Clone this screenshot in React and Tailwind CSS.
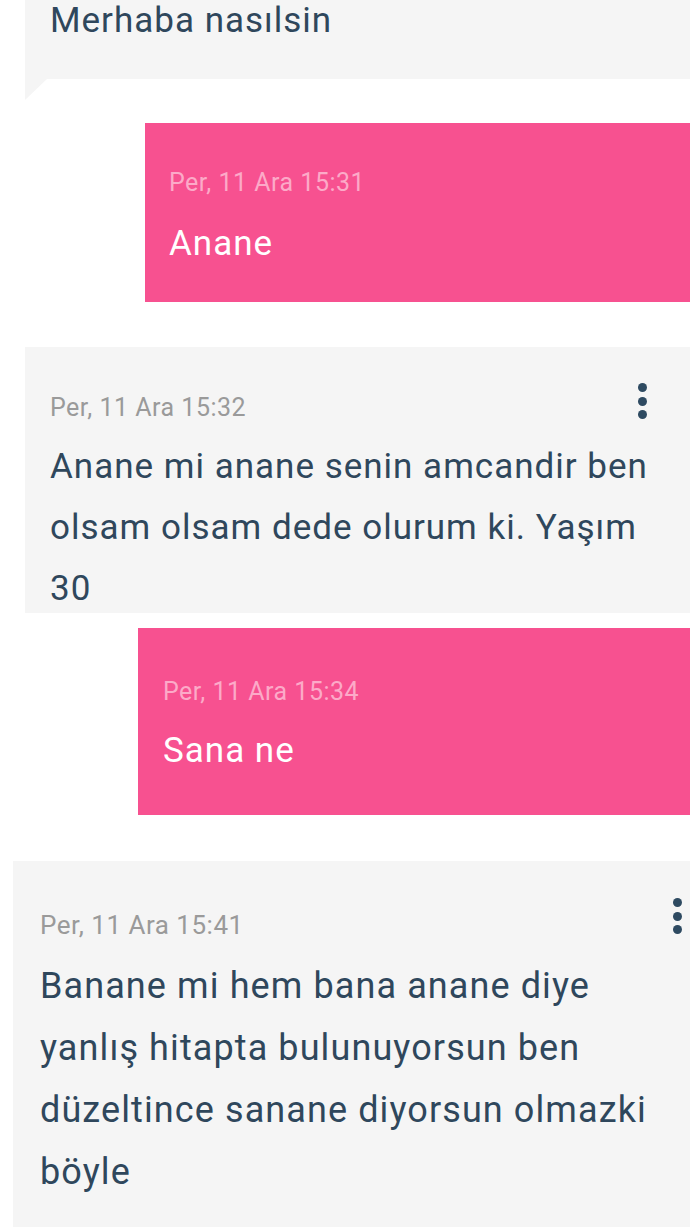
import React from 'react';

const font = { fontFamily: 'Roboto, "Noto Sans", sans-serif' };

const Dots = ({ className }) => (
  <div className={`absolute flex flex-col gap-[4.5px] ${className}`}>
    <span className="block w-[9px] h-[9px] rounded-full bg-[#2e4a61]" />
    <span className="block w-[9px] h-[9px] rounded-full bg-[#2e4a61]" />
    <span className="block w-[9px] h-[9px] rounded-full bg-[#2e4a61]" />
  </div>
);

const Stamp = ({ children, mine, className = 'text-[25px] leading-[30px] tracking-[0.5px]' }) => (
  <div className={`${className} ${mine ? 'text-[#fcaac8]' : 'text-[#9a9a9a]'}`}>{children}</div>
);

const Body = ({ children, mine, className = '', size = 'text-[35px] leading-[61px] tracking-[1px]' }) => (
  <p className={`${size} ${mine ? 'text-white' : 'text-[#2f475c]'} ${className}`}>{children}</p>
);

export default function App() {
  return (
    <div className="w-[690px] h-[1227px] overflow-hidden bg-white" style={font}>
      {/* first incoming message, cut off at the top */}
      <div className="relative ml-[25px] mt-[-10px] bg-[#f5f5f5] pl-[25px] pr-[25px] pb-[28px]">
        <Body>Merhaba nasılsin</Body>
        <svg className="absolute left-0 top-full" width="22" height="21" viewBox="0 0 22 21">
          <polygon points="0,0 22,0 0,21" fill="#f5f5f5" />
        </svg>
      </div>

      <div className="ml-[145px] mt-[44px] h-[179px] bg-[#f75190] pl-[24px] pt-[45px]">
        <Stamp mine>Per, 11 Ara 15:31</Stamp>
        <Body mine className="mt-[15px]">Anane</Body>
      </div>

      <div className="relative ml-[25px] mt-[45px] h-[266px] bg-[#f5f5f5] pl-[25px] pr-[25px] pt-[46px]">
        <Dots className="left-[613px] top-[36px]" />
        <Stamp>Per, 11 Ara 15:32</Stamp>
        <Body className="mt-[13px]">Anane mi anane senin amcandir ben olsam olsam dede olurum ki. Yaşım 30</Body>
      </div>

      <div className="ml-[138px] mt-[15px] h-[187px] bg-[#f75190] pl-[25px] pt-[49px]">
        <Stamp mine>Per, 11 Ara 15:34</Stamp>
        <Body mine className="mt-[13px]">Sana ne</Body>
      </div>

      {/* last message is shown a touch larger */}
      <div className="relative ml-[13px] mt-[46px] bg-[#f5f5f5] pl-[27px] pr-[20px] pt-[49px] pb-[40px]">
        <Dots className="left-[660px] top-[37px]" />
        <Stamp className="text-[26px] leading-[31px] tracking-[0.5px]">Per, 11 Ara 15:41</Stamp>
        <Body size="text-[36px] leading-[62px] tracking-[1.1px]" className="mt-[14px]">
          Banane mi hem bana anane diye yanlış hitapta bulunuyorsun ben düzeltince sanane diyorsun olmazki böyle
        </Body>
      </div>
    </div>
  );
}
